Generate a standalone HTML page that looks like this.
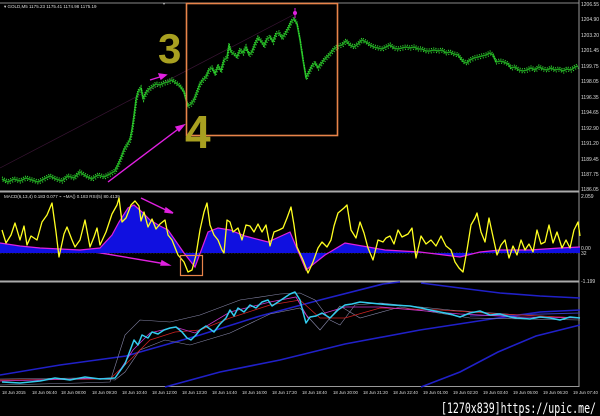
<!DOCTYPE html>
<html><head><meta charset="utf-8"><style>
html,body{margin:0;padding:0;background:#000;width:600px;height:416px;overflow:hidden}
svg{display:block}
.ax{font:5px "Liberation Sans",sans-serif;fill:#ddd}
</style></head><body>
<svg width="600" height="416" viewBox="0 0 600 416" xmlns="http://www.w3.org/2000/svg">
<defs>
<polyline id="pr" points="2,179 8,182 14,179 20,181 26,178 32,180 38,182 44,179 50,176 56,179 62,181 68,176 74,178 80,172 86,176 92,179 98,175 104,177 110,174 115,171 118,165 121,158 124,150 127,145 130,140 132,130 134,116 136,100 138,92 141,88 143,99 146,93 149,89 152,87 156,84 160,85 164,83 168,82 172,80 176,83 180,86 184,92 186,100 188,106 191,104 194,100 197,92 200,84 203,80 206,77 209,70 212,68 215,74 218,66 221,71 224,60 227,58 229,45 231,52 234,54 237,57 240,50 243,53 246,47 249,55 252,52 255,44 258,38 261,41 264,46 267,39 270,37 273,42 276,34 279,33 282,38 285,34 288,29 291,22 294,19 297,24 300,40 303,60 306,78 309,72 312,66 315,63 318,68 321,64 324,60 327,57 330,54 334,49 338,46 342,45 346,41 350,45 354,47 358,44 362,40 366,42 370,45 374,47 378,48 382,49 386,47 390,45 394,48 398,49 402,48 406,47 410,48 414,47 418,49 422,49 426,51 430,51 434,50 438,51 442,50 446,53 450,52 454,54 458,55 461,59 464,62 467,63 470,60 474,58 478,57 482,56 486,55 490,53 493,55 496,62 500,61 504,62 508,64 511,68 515,67 519,70 523,71 527,70 531,68 535,70 539,67 543,69 547,70 551,68 555,70 559,69 563,71 567,69 571,70 575,67 578,66"/>
</defs>
<rect width="600" height="416" fill="#000"/>
<line x1="0" y1="3" x2="579" y2="3" stroke="#888" stroke-width="1"/>
<line x1="579" y1="0" x2="579" y2="387" stroke="#999" stroke-width="1"/>
<line x1="0" y1="191.5" x2="579" y2="191.5" stroke="#aaa" stroke-width="2"/>
<line x1="0" y1="281.5" x2="579" y2="281.5" stroke="#aaa" stroke-width="2"/>
<line x1="0" y1="386.5" x2="579" y2="386.5" stroke="#999" stroke-width="1"/>
<text x="4" y="8" class="ax" style="font-size:4.5px">▾ GOLD,M5  1175.23 1175.41 1174.98 1175.19</text>
<text x="163" y="5" fill="#ccc" style="font-size:4px">▾</text>
<g class="ax">
<text x="581" y="6">1206.55</text><text x="581" y="21">1204.90</text><text x="581" y="37">1203.20</text>
<text x="581" y="52">1201.45</text><text x="581" y="68">1199.75</text><text x="581" y="83">1198.05</text>
<text x="581" y="99">1196.35</text><text x="581" y="114">1194.65</text><text x="581" y="130">1192.90</text>
<text x="581" y="145">1191.20</text><text x="581" y="161">1189.45</text><text x="581" y="176">1187.75</text>
<text x="581" y="191">1186.05</text><text x="581" y="198">2.059</text><text x="581" y="250">0.00</text>
<text x="581" y="255">32</text><text x="581" y="283">-1.199</text>
</g>
<line x1="0" y1="168" x2="293" y2="15" stroke="#3a1535" stroke-width="0.7"/>
<!-- price with candle texture -->
<use href="#pr" fill="none" stroke="#1fa01f" stroke-width="1.6" stroke-linejoin="round"/>
<use href="#pr" fill="none" stroke="#33dd33" stroke-width="1.2" stroke-dasharray="1,1.3" transform="translate(0,-2)"/>
<use href="#pr" fill="none" stroke="#33dd33" stroke-width="1.2" stroke-dasharray="1,1.7" transform="translate(0.6,2)"/>
<rect x="186.5" y="3.5" width="151" height="132" fill="none" stroke="#e8844a" stroke-width="1.6"/>
<text x="158" y="63" fill="#a8a020" style="font:bold 42px 'Liberation Sans',sans-serif">3</text>
<text x="185" y="148" fill="#a8a020" style="font:bold 46px 'Liberation Sans',sans-serif">4</text>
<g stroke="#e020e0" stroke-width="1.4" fill="#e020e0">
<line x1="108" y1="182" x2="181" y2="127"/><polygon points="184,125 176,127 179,131"/>
<line x1="150" y1="80" x2="163" y2="76"/><polygon points="166,75 159,74 161,79"/>
<line x1="141" y1="198" x2="170" y2="212"/><polygon points="173,213 166,208 165,212"/>
<line x1="95" y1="252" x2="166" y2="264"/><polygon points="169,265 162,261 161,265"/>
<circle cx="295" cy="13" r="2" stroke="none"/><line x1="295" y1="8" x2="295" y2="18" stroke-width="1"/>
</g>
<text x="4" y="198" class="ax" style="font-size:4.5px">MACD(6,13,4) 0.183 0.077  ⌁ ⌁MA() 0.183  RSI(5) 80.4139</text>
<line x1="0" y1="253" x2="579" y2="253" stroke="#777" stroke-width="0.6" stroke-dasharray="1.5,1.5"/>
<polygon fill="#1010e0" points="0,243 20,246 40,248 60,249 80,250 100,248 112,235 119,222 128,208 134,205 142,212 150,220 160,226 168,230 184,253 195,267 208,232 218,228 230,230 245,236 268,242 290,232 306,270 325,255 345,243 368,247 385,250 420,252 460,257 480,252 500,250 530,250 560,248 580,247 580,253 0,253"/>
<polyline fill="none" stroke="#e020e0" stroke-width="1.2" points="0,243 20,246 40,248 60,249 80,250 100,248 112,235 119,222 128,208 134,205 142,212 150,220 160,226 168,230 184,253 195,267 208,232 218,228 230,230 245,236 268,242 290,232 306,270 325,255 345,243 368,247 385,250 420,252 460,257 480,252 500,250 530,250 560,248 580,247"/>
<polyline fill="none" stroke="#ffff20" stroke-width="1.3" stroke-linejoin="round" points="2,230 6,243 11,235 15,223 20,240 24,226 27,245 31,236 37,240 42,222 47,215 52,203 56,232 59,257 64,234 67,227 72,240 75,247 80,240 85,220 90,247 94,237 97,228 100,245 106,232 112,214 117,205 119,198 122,222 126,218 131,205 135,201 139,206 141,221 144,212 148,227 152,219 156,229 160,224 165,220 168,235 172,240 178,255 184,262 188,272 192,270 196,255 200,230 204,212 207,203 210,225 214,235 218,240 222,250 224,253 227,220 230,222 233,232 238,228 242,240 246,225 250,226 254,232 258,224 262,232 266,225 270,246 274,232 279,230 283,228 287,218 291,207 294,225 297,247 303,260 308,273 313,262 318,248 322,242 327,247 331,240 334,226 338,213 344,208 347,205 351,230 356,238 360,222 364,233 368,248 373,260 378,240 383,242 386,238 390,236 394,244 398,230 402,237 408,234 412,228 416,258 421,236 426,244 431,240 436,246 441,236 446,246 451,250 455,262 459,268 463,272 467,250 471,225 475,218 477,213 481,232 485,242 489,218 492,232 497,255 501,245 505,240 509,258 513,246 517,255 521,240 525,250 529,244 533,252 537,230 541,244 545,242 549,225 553,243 557,232 562,248 566,240 570,248 574,230 578,222 580,236"/>
<rect x="180.5" y="255.5" width="22" height="20" fill="none" stroke="#e8844a" stroke-width="1.2"/>
<g fill="none">
<polyline stroke="#2020c8" stroke-width="1.6" points="0,375 60,365 126,356 200,335 260,316 320,300 383,284 400,282"/>
<polyline stroke="#2020c8" stroke-width="1.6" points="421,283 460,288 500,293 540,296 580,298"/>
<polyline stroke="#2020c8" stroke-width="1.6" points="165,387 220,372 280,360 345,344 420,330 498,318 540,312 580,310"/>
<polyline stroke="#2020c8" stroke-width="1.6" points="421,387 460,372 498,352 536,336 580,325"/>
<polyline stroke="#3a3ab0" stroke-width="1" points="470,316 580,313"/>
<polyline stroke="#8888aa" stroke-width="0.6" points="0,385 80,383 110,382 125,335 140,320 170,322 200,315 240,300 280,294 300,293 315,300 330,320 340,325 355,305 380,303 450,310 520,315 580,318"/>
<polyline stroke="#8888aa" stroke-width="0.6" points="0,379 80,378 115,380 125,372 140,350 165,340 190,345 230,333 270,314 300,308 320,330 340,306 360,318 400,307 470,318 580,320"/>
<polyline stroke="#cc2222" stroke-width="0.8" points="0,380 110,379 130,360 150,340 175,332 200,330 230,318 270,305 300,300 320,318 345,318 380,308 440,310 500,314 580,318"/>
<polyline stroke="#cc33cc" stroke-width="0.8" points="0,381 115,378 133,350 150,333 175,327 195,333 230,312 270,302 296,297 308,318 345,307 380,307 460,314 520,317 580,318"/>
<polyline stroke="#33ccee" stroke-width="1.5" stroke-linejoin="round" points="2,382 20,383 40,381 55,378 70,380 85,377 100,379 115,378 125,364 134,340 138,345 142,335 148,338 152,332 158,334 164,330 170,328 176,327 182,332 187,338 191,340 196,335 200,330 206,326 214,332 220,324 226,318 230,310 234,316 238,308 244,312 250,305 256,308 262,302 268,300 272,306 278,302 284,298 290,294 295,292 300,300 303,312 306,323 310,317 316,316 322,313 330,318 338,310 345,305 352,304 360,302 370,303 380,304 392,305 410,306 421,308 430,310 440,312 450,314 460,317 470,313 480,311 490,315 500,314 510,317 517,318 530,319 540,317 550,318 560,320 570,317 580,318"/>
</g>
<g class="ax" style="font-size:4.3px">
<text x="2" y="394">18 Jun 2015</text><text x="32" y="394">18 Jun 06:40</text><text x="61" y="394">18 Jun 08:00</text>
<text x="92" y="394">18 Jun 09:20</text><text x="122" y="394">18 Jun 10:40</text><text x="152" y="394">18 Jun 12:00</text>
<text x="182" y="394">18 Jun 13:20</text><text x="212" y="394">18 Jun 14:40</text><text x="242" y="394">18 Jun 16:00</text>
<text x="272" y="394">18 Jun 17:20</text><text x="302" y="394">18 Jun 18:40</text><text x="333" y="394">18 Jun 20:00</text>
<text x="363" y="394">18 Jun 21:20</text><text x="393" y="394">18 Jun 22:40</text><text x="423" y="394">19 Jun 01:00</text>
<text x="453" y="394">19 Jun 02:20</text><text x="483" y="394">19 Jun 03:40</text><text x="513" y="394">19 Jun 05:00</text>
<text x="543" y="394">19 Jun 06:20</text><text x="573" y="394">19 Jun 07:40</text>
</g>
<text x="441" y="413" fill="#fff" textLength="155" lengthAdjust="spacingAndGlyphs" style="font:14px 'DejaVu Sans Mono','Liberation Mono',monospace">[1270x839]https://upic.me/</text>
</svg>
</body></html>
